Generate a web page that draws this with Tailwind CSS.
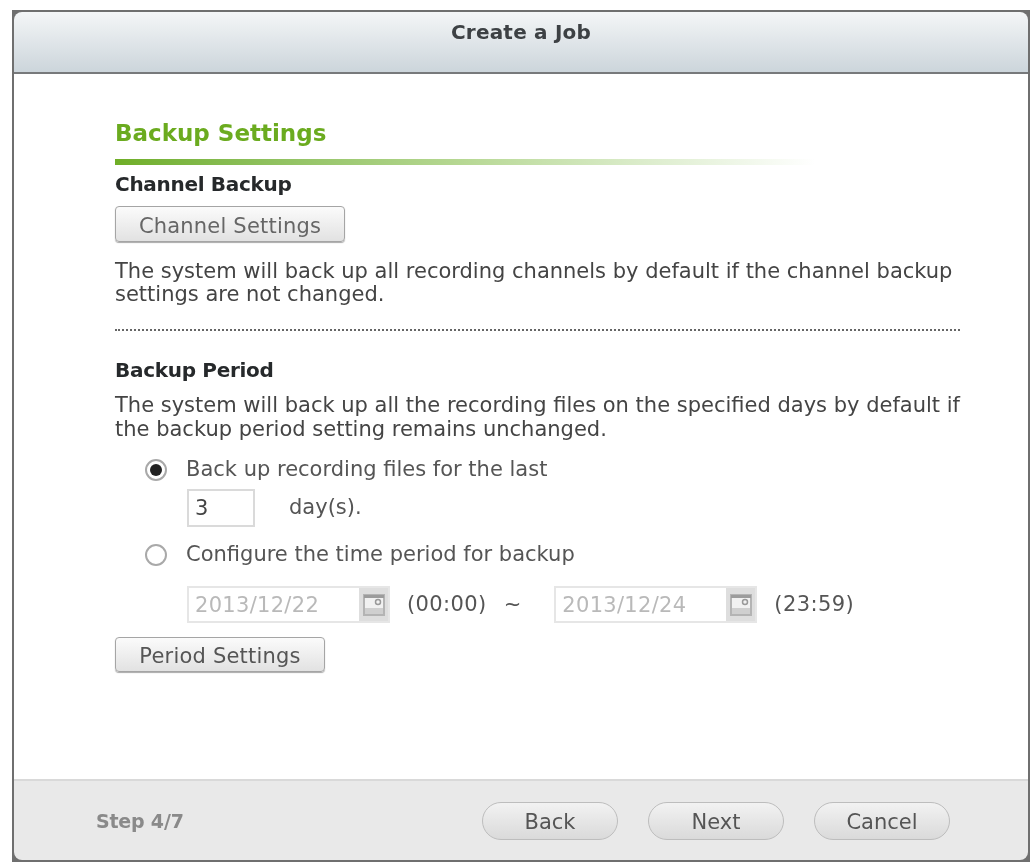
<!DOCTYPE html>
<html lang="en">
<head>
    <meta charset="UTF-8">
    <title>Create a Job</title>
    <script src="https://cdn.jsdelivr.net/npm/@tailwindcss/browser@4"></script>
</head>
<body class="bg-white font-['DejaVu_Sans',sans-serif] text-[#444]">
    <div class="w-[1034px] h-[865px] pt-[10px] pl-[12px] blur-[0.5px]">
        <div class="w-[1018px] h-[852px] bg-[#6f6f6f] p-[2px]">
            <div class="h-full flex flex-col rounded-[8px] overflow-hidden">
                <!-- header -->
                <div class="h-[62px] shrink-0 flex items-center justify-center border-b-2 border-[#77797b] bg-gradient-to-b from-[#f4f6f7] to-[#ccd5db] pb-[20px]">
                    <span class="text-[20px] font-bold text-[#3d4144] tracking-[0.2px]">Create a Job</span>
                </div>

                <!-- content -->
                <div class="flex-1 bg-white pl-[101px] pr-[60px] pt-[45px]">
                    <h2 class="text-[23px] leading-[28px] font-bold text-[#6bab1f]">Backup Settings</h2>
                    <div class="h-[6px] mt-[12px] w-[700px] bg-gradient-to-r from-[#6fae26] via-[#b7d894] to-white"></div>
                    <h3 class="mt-[6px] text-[20px] leading-[26px] font-bold text-[#26292b] tracking-[-0.3px]">Channel Backup</h3>
                    <button class="block mt-[9px] w-[230px] h-[36px] pt-[4px] leading-[24px] text-[21px] text-[#666] tracking-[0.2px] border border-[#a5a5a5] rounded-[4px] bg-gradient-to-b from-[#fbfbfb] to-[#e2e2e2] shadow-[0_1px_1px_#aaa]">Channel Settings</button>
                    <p class="mt-[18px] text-[21px] leading-[23px] text-[#444]">The system will back up all recording channels by default if the channel backup settings are not changed.</p>
                    <div class="mt-[23px] mr-[8px] border-t-2 border-dotted border-[#666]"></div>
                    <h3 class="mt-[26px] text-[20px] leading-[26px] font-bold text-[#26292b] tracking-[-0.3px]">Backup Period</h3>
                    <p class="mt-[10px] text-[21px] leading-[24px] text-[#444]">The system will back up all the recording files on the specified days by default if the backup period setting remains unchanged.</p>

                    <div class="mt-[15px] ml-[30px] flex items-center h-[28px] gap-[19px]">
                        <span class="w-[22px] h-[22px] rounded-full border-2 border-[#a9a9a9] bg-white flex items-center justify-center"><span class="w-[12px] h-[12px] rounded-full bg-[#222]"></span></span>
                        <span class="text-[21px] text-[#555]">Back up recording files for the last</span>
                    </div>
                    <div class="mt-[5px] ml-[72px] flex items-center gap-[34px]">
                        <div class="w-[68px] h-[38px] border-2 border-[#dadada] flex items-center pl-[6px] pt-[1px] text-[21px] text-[#444]">3</div>
                        <span class="text-[21px] text-[#555]">day(s).</span>
                    </div>
                    <div class="mt-[14px] ml-[30px] flex items-center h-[28px] gap-[19px]">
                        <span class="w-[22px] h-[22px] rounded-full border-2 border-[#a9a9a9] bg-white"></span>
                        <span class="text-[21px] text-[#555]">Configure the time period for backup</span>
                    </div>
                    <div class="mt-[17px] ml-[72px] flex items-center text-[21px] text-[#555]">
                        <div class="w-[203px] h-[37px] flex border-2 border-[#e6e6e6]">
                            <span class="flex-1 pl-[6px] leading-[35px] text-[#b9b9b9] tracking-[0.3px]">2013/12/22</span>
                            <span class="w-[29px] bg-[#dedede] flex items-center justify-center">
                                <svg width="22" height="22" viewBox="0 0 22 22"><rect x="1" y="1" width="20" height="20" fill="#f1f1f1" stroke="#b4b4b4" stroke-width="2"/><rect x="1" y="1" width="20" height="3" fill="#9c9c9c"/><rect x="2" y="14" width="18" height="6" fill="#cfcfcf"/><circle cx="15" cy="8" r="2.5" fill="none" stroke="#999" stroke-width="1.5"/></svg>
                            </span>
                        </div>
                        <span class="ml-[17px] pt-[1px] tracking-[0.4px]">(00:00)</span>
                        <span class="ml-[17px]">~</span>
                        <div class="ml-[33px] w-[203px] h-[37px] flex border-2 border-[#e6e6e6]">
                            <span class="flex-1 pl-[6px] leading-[35px] text-[#b9b9b9] tracking-[0.3px]">2013/12/24</span>
                            <span class="w-[29px] bg-[#dedede] flex items-center justify-center">
                                <svg width="22" height="22" viewBox="0 0 22 22"><rect x="1" y="1" width="20" height="20" fill="#f1f1f1" stroke="#b4b4b4" stroke-width="2"/><rect x="1" y="1" width="20" height="3" fill="#9c9c9c"/><rect x="2" y="14" width="18" height="6" fill="#cfcfcf"/><circle cx="15" cy="8" r="2.5" fill="none" stroke="#999" stroke-width="1.5"/></svg>
                            </span>
                        </div>
                        <span class="ml-[17px] pt-[1px] tracking-[0.4px]">(23:59)</span>
                    </div>
                    <button class="block mt-[14px] w-[210px] h-[35px] pt-[2px] leading-[24px] text-[21px] text-[#555] tracking-[0.2px] border border-[#a5a5a5] rounded-[4px] bg-gradient-to-b from-[#fbfbfb] to-[#e2e2e2] shadow-[0_1px_1px_#aaa]">Period Settings</button>
                </div>

                <!-- footer -->
                <div class="h-[81px] shrink-0 flex items-center bg-[#e9e9e9] border-t-2 border-[#d9d9d9] pl-[82px] pr-[78px]">
                    <span class="pt-[2px] text-[19px] font-bold text-[#8a8a8a] tracking-[-0.2px]">Step 4/7</span>
                    <div class="ml-auto flex gap-[30px]">
                        <button class="w-[136px] h-[38px] pt-[3px] leading-[24px] rounded-full border border-[#bdbdbd] bg-gradient-to-b from-[#f2f2f2] to-[#dadada] text-[21px] text-[#555]">Back</button>
                        <button class="w-[136px] h-[38px] pt-[3px] leading-[24px] rounded-full border border-[#bdbdbd] bg-gradient-to-b from-[#f2f2f2] to-[#dadada] text-[21px] text-[#555]">Next</button>
                        <button class="w-[136px] h-[38px] pt-[3px] leading-[24px] rounded-full border border-[#bdbdbd] bg-gradient-to-b from-[#f2f2f2] to-[#dadada] text-[21px] text-[#555]">Cancel</button>
                    </div>
                </div>
            </div>
        </div>
    </div>
</body>
</html>
